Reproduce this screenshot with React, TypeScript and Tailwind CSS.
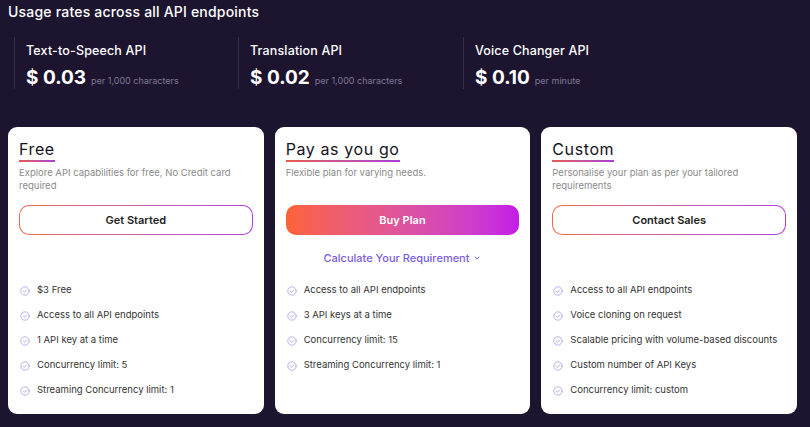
import React from "react";

const font = { fontFamily: "Inter, 'Noto Sans', sans-serif" };

function Check() {
  return (
    <svg width="10" height="10" viewBox="0 0 24 24" fill="none" stroke="#b6a6e6" strokeWidth="2.2" strokeLinecap="round" strokeLinejoin="round">
      <circle cx="12" cy="12" r="10" />
      <path d="M8 12.5l2.8 2.8L16 9.5" />
    </svg>
  );
}

function Stat({ label, price, unit }: { label: string; price: string; unit: string }) {
  return (
    <div className="flex flex-col border-l border-[#342c48] pl-[11px] h-[52px] pt-[6px]">
      <div className="text-[12.5px] leading-[16px] font-medium text-white tracking-[0.15px]">{label}</div>
      <div className="mt-[6px] flex items-baseline gap-[5px]">
        <span className="text-[19px] leading-[26px] font-bold text-white">{price}</span>
        <span className="text-[9px] text-[#7f7794]">{unit}</span>
      </div>
    </div>
  );
}

function OutlineButton({ children }: { children: React.ReactNode }) {
  return (
    <div className="rounded-[10px] p-[1px] bg-gradient-to-r from-[#ee6a4e] to-[#b03be2] h-[30px]">
      <div className="h-full w-full rounded-[9px] bg-white flex items-center justify-center text-[11px] font-semibold text-[#222]">
        {children}
      </div>
    </div>
  );
}

function Card({
  title,
  desc,
  button,
  link,
  features,
}: {
  title: string;
  desc: string;
  button: React.ReactNode;
  link?: boolean;
  features: string[];
}) {
  return (
    <div className="bg-white rounded-[9px] pt-[12px] px-[11px] pb-[11px] flex flex-col">
      <div className="w-fit">
        <div className="text-[16px] leading-[20px] text-[#15121d] tracking-[0.6px]">{title}</div>
        <div className="mt-[1px] h-[2px] bg-gradient-to-r from-[#e8584a] to-[#a83ad8]" />
      </div>
      <div className="mt-[4px] h-[26px] text-[9.5px] leading-[13px] text-[#8a8a8a] pr-[14px]">{desc}</div>
      <div className="mt-[13px]">{button}</div>
      <div className="mt-[11px] h-[24px] flex items-center justify-center">
        {link && (
          <span className="flex items-center gap-[4px] text-[11px] font-medium text-[#7a5ce0]">
            Calculate Your Requirement
            <svg width="8" height="8" viewBox="0 0 24 24" fill="none" stroke="#7a5ce0" strokeWidth="3" strokeLinecap="round" strokeLinejoin="round">
              <path d="M6 9l6 6 6-6" />
            </svg>
          </span>
        )}
      </div>
      <div className="mt-[8px] flex flex-col">
        {features.map((f) => (
          <div key={f} className="h-[25px] flex items-center gap-[7px] pl-[1px]">
            <Check />
            <span className="text-[9.5px] text-[#333]">{f}</span>
          </div>
        ))}
      </div>
    </div>
  );
}

export default function App() {
  return (
    <div style={font} className="w-[810px] h-[427px] bg-[#1d1530] overflow-hidden">
      <div className="pl-[8px] pr-[13px] pt-[2px]">
        <div className="text-[14px] leading-[20px] font-medium text-white tracking-[0.2px]">
          Usage rates across all API endpoints
        </div>
        <div className="mt-[15px] pl-[6px] grid grid-cols-[224px_225px_1fr]">
          <Stat label="Text-to-Speech API" price="$ 0.03" unit="per 1,000 characters" />
          <Stat label="Translation API" price="$ 0.02" unit="per 1,000 characters" />
          <Stat label="Voice Changer API" price="$ 0.10" unit="per minute" />
        </div>
        <div className="mt-[38px] grid grid-cols-3 gap-[11px]">
          <Card
            title="Free"
            desc="Explore API capabilities for free, No Credit card required"
            button={<OutlineButton>Get Started</OutlineButton>}
            features={[
              "$3 Free",
              "Access to all API endpoints",
              "1 API key at a time",
              "Concurrency limit: 5",
              "Streaming Concurrency limit: 1",
            ]}
          />
          <Card
            title="Pay as you go"
            desc="Flexible plan for varying needs."
            button={
              <div className="h-[30px] rounded-[10px] bg-gradient-to-r from-[#fd6234] to-[#c41ae6] flex items-center justify-center text-[11px] font-semibold text-white">
                Buy Plan
              </div>
            }
            link
            features={[
              "Access to all API endpoints",
              "3 API keys at a time",
              "Concurrency limit: 15",
              "Streaming Concurrency limit: 1",
            ]}
          />
          <Card
            title="Custom"
            desc="Personalise your plan as per your tailored requirements"
            button={<OutlineButton>Contact Sales</OutlineButton>}
            features={[
              "Access to all API endpoints",
              "Voice cloning on request",
              "Scalable pricing with volume-based discounts",
              "Custom number of API Keys",
              "Concurrency limit: custom",
            ]}
          />
        </div>
      </div>
    </div>
  );
}
